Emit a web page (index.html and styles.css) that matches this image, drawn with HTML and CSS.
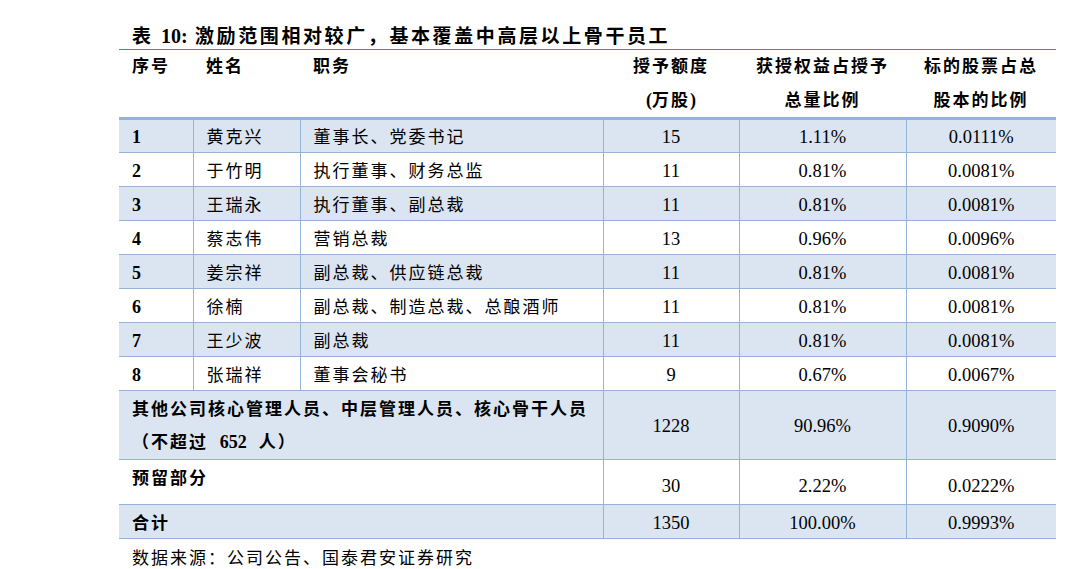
FILE: index.html
```html
<!DOCTYPE html>
<html lang="zh-CN">
<head>
<meta charset="utf-8">
<title>表 10</title>
<link rel="stylesheet" href="styles.css">
</head>
<body>
<div class="page">
  <div class="title"><span class="cn">表</span> <span class="num">10:</span> <span class="cn">激励范围相对较广，基本覆盖中高层以上骨干员工</span></div>
  <table class="grid">
    <colgroup>
      <col class="c1"><col class="c2"><col class="c3"><col class="c4"><col class="c5"><col class="c6">
    </colgroup>
    <thead>
      <tr>
        <th class="left">序号</th>
        <th class="left">姓名</th>
        <th class="left">职务</th>
        <th class="center">授予额度<br><span class="num">(</span>万股<span class="num">)</span></th>
        <th class="center">获授权益占授予<br>总量比例</th>
        <th class="center">标的股票占总<br>股本的比例</th>
      </tr>
    </thead>
    <tbody>
      <tr class="shade"><td class="idx">1</td><td class="txt">黄克兴</td><td class="txt">董事长、党委书记</td><td class="val">15</td><td class="val">1.11%</td><td class="val">0.0111%</td></tr>
      <tr><td class="idx">2</td><td class="txt">于竹明</td><td class="txt">执行董事、财务总监</td><td class="val">11</td><td class="val">0.81%</td><td class="val">0.0081%</td></tr>
      <tr class="shade"><td class="idx">3</td><td class="txt">王瑞永</td><td class="txt">执行董事、副总裁</td><td class="val">11</td><td class="val">0.81%</td><td class="val">0.0081%</td></tr>
      <tr><td class="idx">4</td><td class="txt">蔡志伟</td><td class="txt">营销总裁</td><td class="val">13</td><td class="val">0.96%</td><td class="val">0.0096%</td></tr>
      <tr class="shade"><td class="idx">5</td><td class="txt">姜宗祥</td><td class="txt">副总裁、供应链总裁</td><td class="val">11</td><td class="val">0.81%</td><td class="val">0.0081%</td></tr>
      <tr><td class="idx">6</td><td class="txt">徐楠</td><td class="txt">副总裁、制造总裁、总酿酒师</td><td class="val">11</td><td class="val">0.81%</td><td class="val">0.0081%</td></tr>
      <tr class="shade"><td class="idx">7</td><td class="txt">王少波</td><td class="txt">副总裁</td><td class="val">11</td><td class="val">0.81%</td><td class="val">0.0081%</td></tr>
      <tr><td class="idx">8</td><td class="txt">张瑞祥</td><td class="txt">董事会秘书</td><td class="val">9</td><td class="val">0.67%</td><td class="val">0.0067%</td></tr>
      <tr class="shade tall"><td class="group" colspan="3">其他公司核心管理人员、中层管理人员、核心骨干人员<br>（不超过 <span class="num">652</span> 人）</td><td class="val">1228</td><td class="val">90.96%</td><td class="val">0.9090%</td></tr>
      <tr class="mid"><td class="group" colspan="3">预留部分</td><td class="val">30</td><td class="val">2.22%</td><td class="val">0.0222%</td></tr>
      <tr class="shade"><td class="group" colspan="3">合计</td><td class="val">1350</td><td class="val">100.00%</td><td class="val">0.9993%</td></tr>
    </tbody>
  </table>
  <div class="source">数据来源：公司公告、国泰君安证券研究</div>
</div>
</body>
</html>
```

FILE: styles.css
```css
html, body {
  margin: 0;
  padding: 0;
  background: #ffffff;
  color: #000000;
}

.page {
  margin-left: 119px;
  width: 937px;
  font-family: "Liberation Serif", "Noto Sans CJK SC", serif;
}

.cn {
  font-family: "Noto Sans CJK SC", sans-serif;
}

.num {
  font-family: "Liberation Serif", serif;
  letter-spacing: 0;
}

.title {
  height: 49px;
  box-sizing: border-box;
  padding: 23px 0 0 13px;
  font-size: 19px;
  line-height: 24px;
  font-weight: bold;
  letter-spacing: 2.6px;
  white-space: nowrap;
}

.title .num {
  font-size: 20px;
}

.grid {
  width: 937px;
  table-layout: fixed;
  border-collapse: collapse;
  border-top: 1px solid #4f81bd;
}

.c1 { width: 74px; }
.c2 { width: 107px; }
.c3 { width: 303px; }
.c4 { width: 136px; }
.c5 { width: 167px; }
.c6 { width: 150px; }

.grid th {
  font-family: "Liberation Serif", "Noto Sans CJK SC", serif;
  font-weight: bold;
  font-size: 17px;
  letter-spacing: 2px;
  line-height: 33.5px;
  padding: 0;
  vertical-align: top;
  border-bottom: 3px solid #95b3d7;
}

.grid th .num {
  font-size: 18px;
}

.grid th.left {
  text-align: left;
  padding-left: 13px;
}

.grid th.center {
  text-align: center;
}

.grid td {
  box-sizing: border-box;
  height: 34px;
  padding: 0 13px;
  border-bottom: 1px solid #95b3d7;
  border-left: 1px solid #95b3d7;
  line-height: 32px;
  white-space: nowrap;
  overflow: hidden;
}

.grid td:first-child {
  border-left: none;
}

.grid tr.shade td {
  background: #dbe5f1;
}

.grid td.idx {
  font-family: "Liberation Serif", serif;
  font-weight: bold;
  font-size: 18px;
  padding-top: 2px;
  line-height: 30px;
}

.grid td.txt {
  font-family: "Noto Sans CJK SC", sans-serif;
  font-size: 17px;
  letter-spacing: 2px;
}

.grid td.val {
  font-family: "Liberation Serif", serif;
  font-size: 18.5px;
  text-align: center;
  padding: 3px 0 0 0;
  line-height: 29px;
}

.grid td.group {
  font-family: "Noto Sans CJK SC", sans-serif;
  font-weight: bold;
  font-size: 17px;
  letter-spacing: 2px;
  line-height: 33px;
  vertical-align: top;
}

.grid td.group .num {
  font-weight: bold;
  font-size: 18px;
  letter-spacing: 0;
  padding: 0 6px;
}

.grid tr.tall td {
  height: 67px;
}

.grid tr.mid td {
  height: 45px;
}

.grid tr.mid td.val {
  padding-top: 8px;
}

.source {
  font-family: "Noto Sans CJK SC", sans-serif;
  font-size: 17px;
  letter-spacing: 2px;
  line-height: 36px;
  padding-left: 13px;
}
```
